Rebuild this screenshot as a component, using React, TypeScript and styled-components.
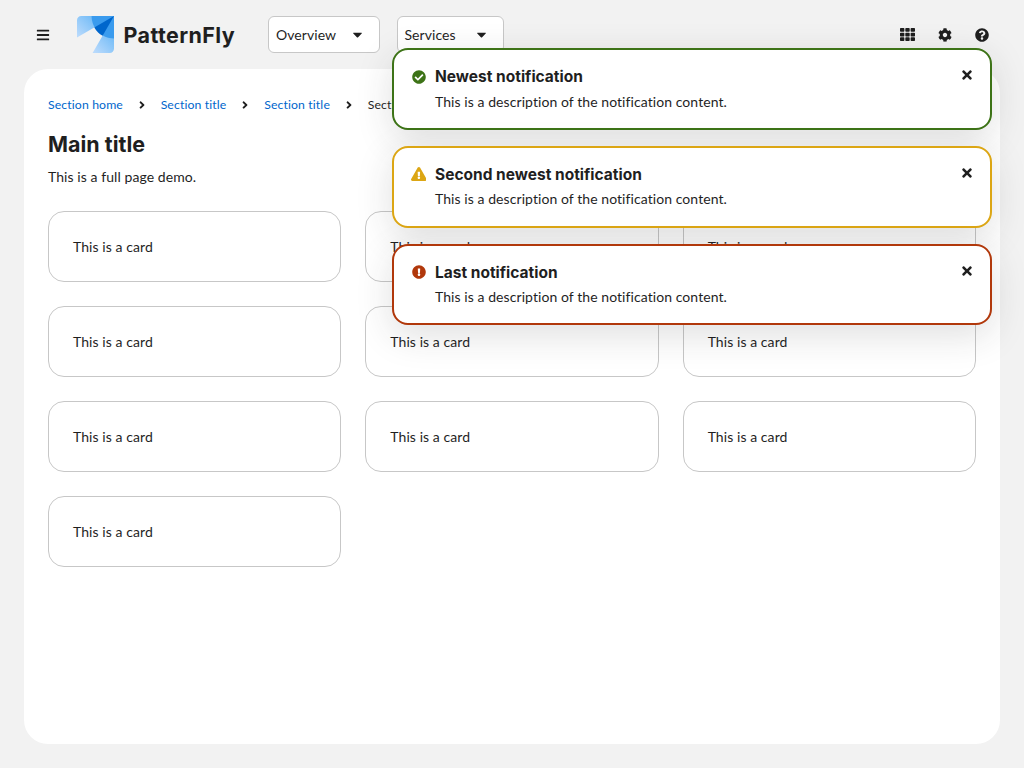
import React from "react";
import styled, { createGlobalStyle } from "styled-components";
import {
  FaAngleRight,
  FaBars,
  FaCaretDown,
  FaCheckCircle,
  FaCog,
  FaExclamationCircle,
  FaExclamationTriangle,
  FaQuestionCircle,
  FaTh,
  FaTimes,
} from "react-icons/fa";

const headingFont = `Inter, "Liberation Sans", sans-serif`;

const GlobalStyle = createGlobalStyle`
  *, *::before, *::after { box-sizing: border-box; }
  html, body, #root { height: 100%; }
  body {
    margin: 0;
    overflow: hidden;
    background: #f2f2f2;
    color: #1f1f1f;
    font-family: Lato, "Liberation Sans", sans-serif;
    font-size: 14px;
    line-height: 21px;
    letter-spacing: 0.07px;
    font-variant-ligatures: none;
  }
  button { font: inherit; letter-spacing: inherit; color: inherit; cursor: pointer; }
  svg { display: block; }
`;

const Page = styled.div`
  display: flex;
  flex-direction: column;
  height: 768px;
  width: 1024px;
`;

const Masthead = styled.header`
  display: flex;
  align-items: center;
  height: 69px;
  flex: none;
  padding: 0 24px 0 24px;
`;

const IconButton = styled.button`
  display: grid;
  place-items: center;
  width: 37px;
  height: 37px;
  padding: 0;
  border: 0;
  background: none;
  font-size: 14px;
`;

const Brand = styled.div`
  display: flex;
  align-items: center;
  gap: 9.5px;
  width: 175px;
  margin-left: 16px;
`;

const Wordmark = styled.span`
  font-family: ${headingFont};
  font-size: 21.5px;
  font-weight: 700;
  line-height: 30px;
  letter-spacing: 0.4px;
  white-space: nowrap;
`;

const Toggles = styled.div`
  display: flex;
  gap: 16.5px;
  margin-left: 16px;
`;

const Toggle = styled.button<{ $width: number }>`
  display: flex;
  align-items: center;
  justify-content: space-between;
  width: ${(p) => p.$width}px;
  height: 37px;
  padding: 0 14px 0 7px;
  border: 1px solid #c7c7c7;
  border-radius: 6px;
  background: #fff;

  svg { font-size: 15px; }
`;

const Tools = styled.div`
  display: flex;
  margin-left: auto;
`;

const Main = styled.main`
  flex: 1;
  margin: 0 24px 24px;
  padding: 24px;
  border-radius: 24px;
  background: #fff;
`;

const Breadcrumb = styled.nav`
  display: flex;
  align-items: center;
  height: 23px;
  font-size: 12.25px;
  letter-spacing: 0.12px;
  white-space: nowrap;
`;

const Crumb = styled.span<{ $current?: boolean }>`
  color: ${(p) => (p.$current ? "#1f1f1f" : "#0066cc")};
`;

const Divider = styled.span`
  display: grid;
  place-items: center;
  width: 37.7px;
  font-size: 12px;
`;

const Title = styled.h1`
  margin: 13.5px 0 0;
  font-family: ${headingFont};
  font-size: 21.5px;
  font-weight: 700;
  line-height: 29px;
  letter-spacing: 0;
`;

const Intro = styled.p`
  margin: 7.5px 0 0;
`;

const Gallery = styled.div`
  display: grid;
  grid-template-columns: repeat(3, 1fr);
  gap: 24px;
  margin-top: 24.4px;
`;

const Card = styled.article`
  height: 71px;
  padding: 23.5px 24px;
  border: 1px solid #c7c7c7;
  border-radius: 16px;
`;

const AlertGroup = styled.ul`
  position: absolute;
  top: 48px;
  left: 392px;
  display: flex;
  flex-direction: column;
  gap: 16px;
  width: 600px;
  margin: 0;
  padding: 0;
  list-style: none;
`;

const AlertBox = styled.li<{ $color: string }>`
  display: grid;
  grid-template-columns: 16px 1fr 32px;
  column-gap: 8.5px;
  height: 81.8px;
  padding: 14px 7px 14px 16.5px;
  border: 2px solid ${(p) => p.$color};
  border-radius: 16px;
  background: #fff;
  box-shadow: 0 10px 36px rgba(41, 41, 41, 0.15);
`;

const AlertIcon = styled.span<{ $color: string }>`
  display: grid;
  place-items: center;
  height: 25px;
  color: ${(p) => p.$color};
  font-size: 14px;
`;

const AlertTitle = styled.h4`
  margin: 0;
  font-family: ${headingFont};
  font-size: 15.5px;
  font-weight: 700;
  line-height: 26px;
  letter-spacing: 0;
`;

const AlertText = styled.p`
  margin: 0.5px 0 0;
`;

const CloseButton = styled(IconButton)`
  width: 32px;
  height: 22px;
`;

const Logo = () => (
  <svg width="37" height="37" viewBox="0 0 37 37">
    <defs>
      <linearGradient id="wingLeft" x1="17" y1="2" x2="0" y2="19" gradientUnits="userSpaceOnUse">
        <stop offset="0" stopColor="#73bcf7" />
        <stop offset="1" stopColor="#b9dafc" />
      </linearGradient>
      <linearGradient id="wingBottom" x1="36" y1="20" x2="19" y2="37" gradientUnits="userSpaceOnUse">
        <stop offset="0" stopColor="#73bcf7" />
        <stop offset="1" stopColor="#b9dafc" />
      </linearGradient>
    </defs>
    <path d="M4.2 0H37L0 21.4V4.2A4.2 4.2 0 0 1 4.2 0Z" fill="url(#wingLeft)" />
    <path d="M37 0V32.8A4.2 4.2 0 0 1 32.8 37H15.6Z" fill="url(#wingBottom)" />
    <path d="M14.6 0H37V22.4C24.6 22.4 14.6 12.4 14.6 0Z" fill="#3a9bee" />
    <path d="M37 0 17.3 11.4C19.3 15 22.1 17.8 25.6 19.7Z" fill="#0066cc" />
  </svg>
);

const crumbs = ["Section home", "Section title", "Section title", "Section title"];

const alerts = [
  { title: "Newest notification", color: "#3d7317", Icon: FaCheckCircle, size: 14 },
  { title: "Second newest notification", color: "#dca614", Icon: FaExclamationTriangle, size: 15.75 },
  { title: "Last notification", color: "#b1380b", Icon: FaExclamationCircle, size: 14 },
];

export default function App() {
  return (
    <>
      <GlobalStyle />
      <Page>
        <Masthead>
          <IconButton aria-label="Global navigation"><FaBars /></IconButton>
          <Brand>
            <Logo />
            <Wordmark>PatternFly</Wordmark>
          </Brand>
          <Toggles>
            <Toggle $width={112}>Overview<FaCaretDown /></Toggle>
            <Toggle $width={107}>Services<FaCaretDown /></Toggle>
          </Toggles>
          <Tools>
            <IconButton aria-label="Applications"><FaTh size={15} /></IconButton>
            <IconButton aria-label="Settings"><FaCog /></IconButton>
            <IconButton aria-label="Help"><FaQuestionCircle /></IconButton>
          </Tools>
        </Masthead>
        <Main>
          <Breadcrumb>
            {crumbs.map((label, i) => (
              <React.Fragment key={i}>
                {i > 0 && <Divider><FaAngleRight /></Divider>}
                <Crumb $current={i === crumbs.length - 1}>{label}</Crumb>
              </React.Fragment>
            ))}
          </Breadcrumb>
          <Title>Main title</Title>
          <Intro>This is a full page demo.</Intro>
          <Gallery>
            {Array.from({ length: 10 }, (_, i) => (
              <Card key={i}>This is a card</Card>
            ))}
          </Gallery>
        </Main>
      </Page>
      <AlertGroup>
        {alerts.map(({ title, color, Icon, size }) => (
          <AlertBox key={title} $color={color}>
            <AlertIcon $color={color}><Icon size={size} /></AlertIcon>
            <div>
              <AlertTitle>{title}</AlertTitle>
              <AlertText>This is a description of the notification content.</AlertText>
            </div>
            <CloseButton aria-label="Close"><FaTimes /></CloseButton>
          </AlertBox>
        ))}
      </AlertGroup>
    </>
  );
}
